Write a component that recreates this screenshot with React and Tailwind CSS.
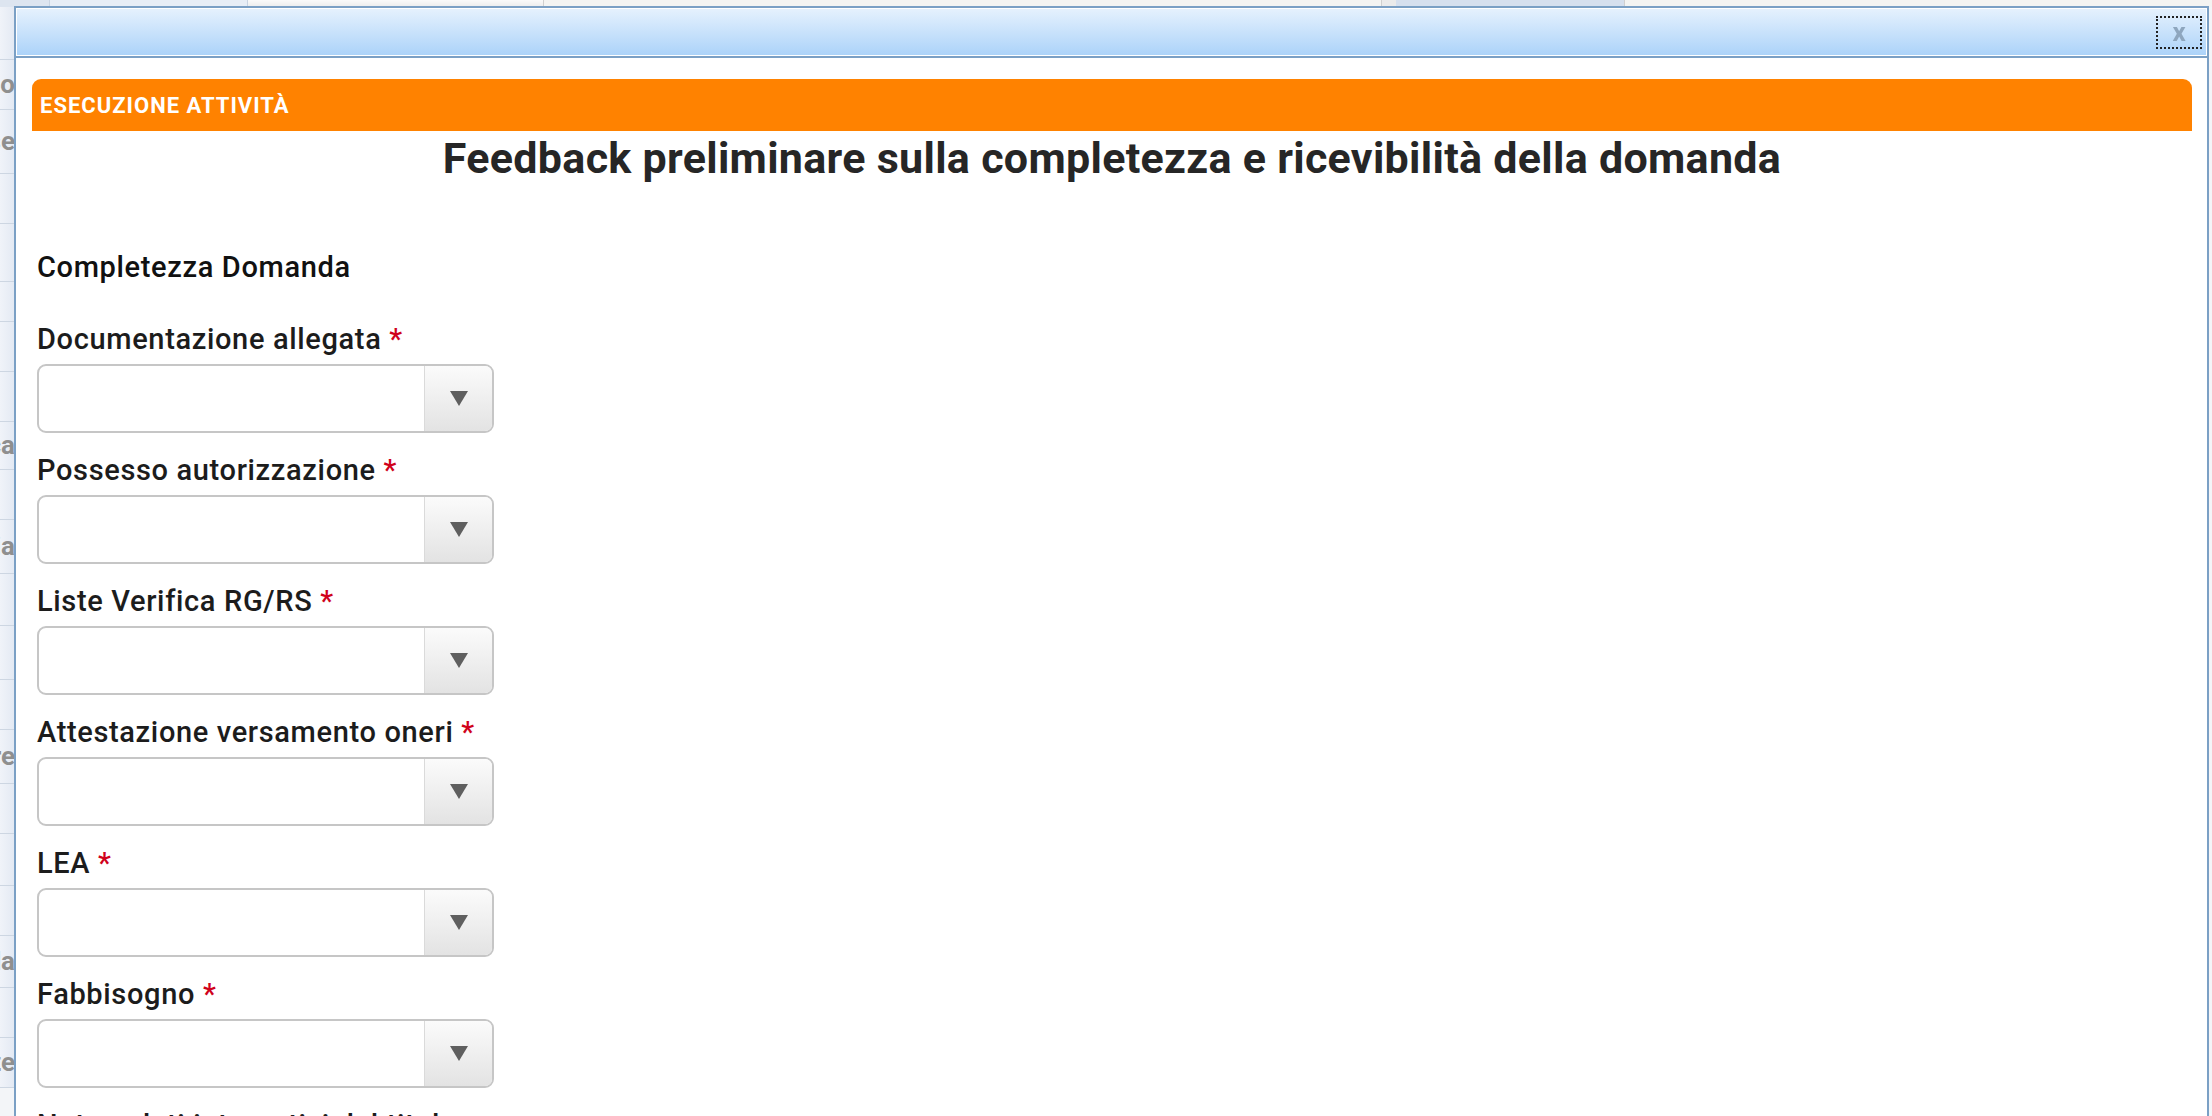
import React from "react";

const fields = [
    "Documentazione allegata",
    "Possesso autorizzazione",
    "Liste Verifica RG/RS",
    "Attestazione versamento oneri",
    "LEA",
    "Fabbisogno",
];

// rows of the page that sits behind the dialog (only a sliver is visible)
const sideRows = [
    { h: 53, t: "" },
    { h: 50, t: "Tipo" },
    { h: 64, t: "Fase" },
    { h: 50, t: "" },
    { h: 58, t: "" },
    { h: 40, t: "" },
    { h: 50, t: "" },
    { h: 50, t: "" },
    { h: 48, t: "Pratica" },
    { h: 50, t: "" },
    { h: 54, t: "Tipologia" },
    { h: 52, t: "" },
    { h: 54, t: "" },
    { h: 50, t: "" },
    { h: 54, t: "Settore" },
    { h: 50, t: "" },
    { h: 52, t: "" },
    { h: 50, t: "" },
    { h: 52, t: "Azienda" },
    { h: 50, t: "" },
    { h: 50, t: "Richiedente" },
];

const SelectBox = () => (
    <div className="flex h-[69px] w-[457px] overflow-hidden rounded-[9px] border-2 border-[#c6c6c6] bg-white">
        <div className="flex-1" />
        <div className="flex w-[68px] items-center justify-center border-l border-[#dadada] bg-gradient-to-b from-[#fbfbfb] to-[#e3e3e3]">
            <svg width="18" height="15" viewBox="0 0 18 15">
                <polygon points="0,0 18,0 9,15" fill="#5f5f5f" />
            </svg>
        </div>
    </div>
);

const Field = ({ label }) => (
    <div className="mb-[19px]">
        <div className="mb-[7px] h-[36px] text-[29px] leading-[36px] font-medium tracking-[0.65px] text-[#1c1c1c]">
            {label} <span className="text-[#d0021b]">*</span>
        </div>
        <SelectBox />
    </div>
);

export default function App() {
    return (
        <div className="relative h-[1116px] w-full overflow-hidden bg-[#f3f5f8] font-[Roboto,sans-serif]">
            {/* page behind the dialog */}
            <div className="flex h-[7px]">
                <div className="w-[49px] bg-[#dde5f0]" />
                <div className="w-[199px] border-x border-[#c9d4e2] bg-[#e8eef6]" />
                <div className="w-[295px] bg-gradient-to-b from-[#fafafa] to-[#ececec]" />
                <div className="w-[838px] border-l border-[#d0d0d0] bg-[#f4f4f2]" />
                <div className="w-[15px] border-l border-[#d0d0d0] bg-[#ebebeb]" />
                <div className="w-[228px] bg-[#d6e0ee]" />
                <div className="flex-1 border-l border-[#d0d0d0] bg-[#f4f4f2]" />
            </div>
            <div className="flex">
                <div className="w-[15px] bg-gradient-to-r from-[#f0f3f9] to-[#e3e9f3]">
                    {sideRows.map((r, i) => (
                        <div
                            key={i}
                            style={{ height: r.h }}
                            className="flex items-center justify-end overflow-hidden border-b border-[#cdd6e2] whitespace-nowrap text-[26px] font-bold text-[#8f8f8f]"
                        >
                            {r.t}
                        </div>
                    ))}
                </div>
            </div>

            {/* dialog window */}
            <div className="absolute top-[6px] left-[14px] right-[3px] bottom-[-60px] border-2 border-[#7ba0c5] bg-white">
                <div className="flex h-[48px] items-center justify-end border border-white bg-gradient-to-b from-[#e5f1fd] to-[#acd3f9] pr-[4px]">
                    <div className="flex h-[33px] w-[46px] items-center justify-center border-2 border-dotted border-[#222]">
                        <span className="text-[26px] leading-none font-bold text-[#8ea6be] blur-[0.5px]">x</span>
                    </div>
                </div>
                <div className="border-t-2 border-[#7ba0c5] pt-[21px] pr-[15px] pl-[16px]">
                    <div className="flex h-[52px] items-center rounded-t-[9px] bg-[#ff8200] pl-[8px]">
                        <span className="text-[22px] font-bold tracking-[1px] text-white">ESECUZIONE ATTIVITÀ</span>
                    </div>
                    <h1 className="text-center text-[43px] leading-[54px] font-bold tracking-[0.3px] text-[#262626]">
                        Feedback preliminare sulla completezza e ricevibilità della domanda
                    </h1>
                    <div className="px-[5px]">
                        <div className="mt-[64px] mb-[36px] h-[36px] text-[29px] leading-[36px] font-medium tracking-[0.65px] text-[#111]">
                            Completezza Domanda
                        </div>
                        {fields.map((f) => (
                            <Field key={f} label={f} />
                        ))}
                        <div className="h-[36px] text-[29px] leading-[36px] font-medium tracking-[0.65px] text-[#1c1c1c]">
                            Note e dati integrativi del titolare
                        </div>
                    </div>
                </div>
            </div>
        </div>
    );
}
